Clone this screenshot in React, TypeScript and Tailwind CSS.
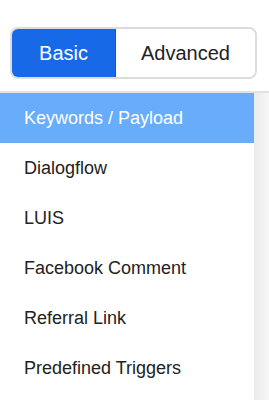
import React from "react";

const items = [
  "Keywords / Payload",
  "Dialogflow",
  "LUIS",
  "Facebook Comment",
  "Referral Link",
  "Predefined Triggers",
];

export default function App() {
  return (
    <div
      className="w-[269px] h-[400px] bg-white overflow-hidden flex flex-col"
      style={{ fontFamily: '"Liberation Sans", Arial, sans-serif' }}
    >
      <div className="pt-[27px] pl-[10px]">
        <div className="inline-flex h-[52px] border-2 border-[#dcdcdc] rounded-[8px] overflow-hidden">
          <div className="w-[104px] flex items-center justify-center bg-[#1769e8] text-white text-[20px] border-r border-[#0f58c8]">
            Basic
          </div>
          <div className="w-[139px] flex items-center justify-center bg-white text-[#222] text-[20px]">
            Advanced
          </div>
        </div>
      </div>
      <div className="mt-[12px] flex-1 flex border-t-2 border-[#e2e2e2]">
        <div className="w-[254px] flex flex-col bg-white">
          {items.map((t, i) => (
            <div
              key={t}
              className={
                i === 0
                  ? "h-[50px] flex items-center pl-[24px] text-[18px] bg-[#68adfc] text-white"
                  : "h-[50px] flex items-center pl-[24px] text-[18px] text-[#222]"
              }
            >
              {t}
            </div>
          ))}
        </div>
        <div className="flex-1 bg-gradient-to-r from-[#ebebeb] to-[#f7f7f7]" />
      </div>
    </div>
  );
}
